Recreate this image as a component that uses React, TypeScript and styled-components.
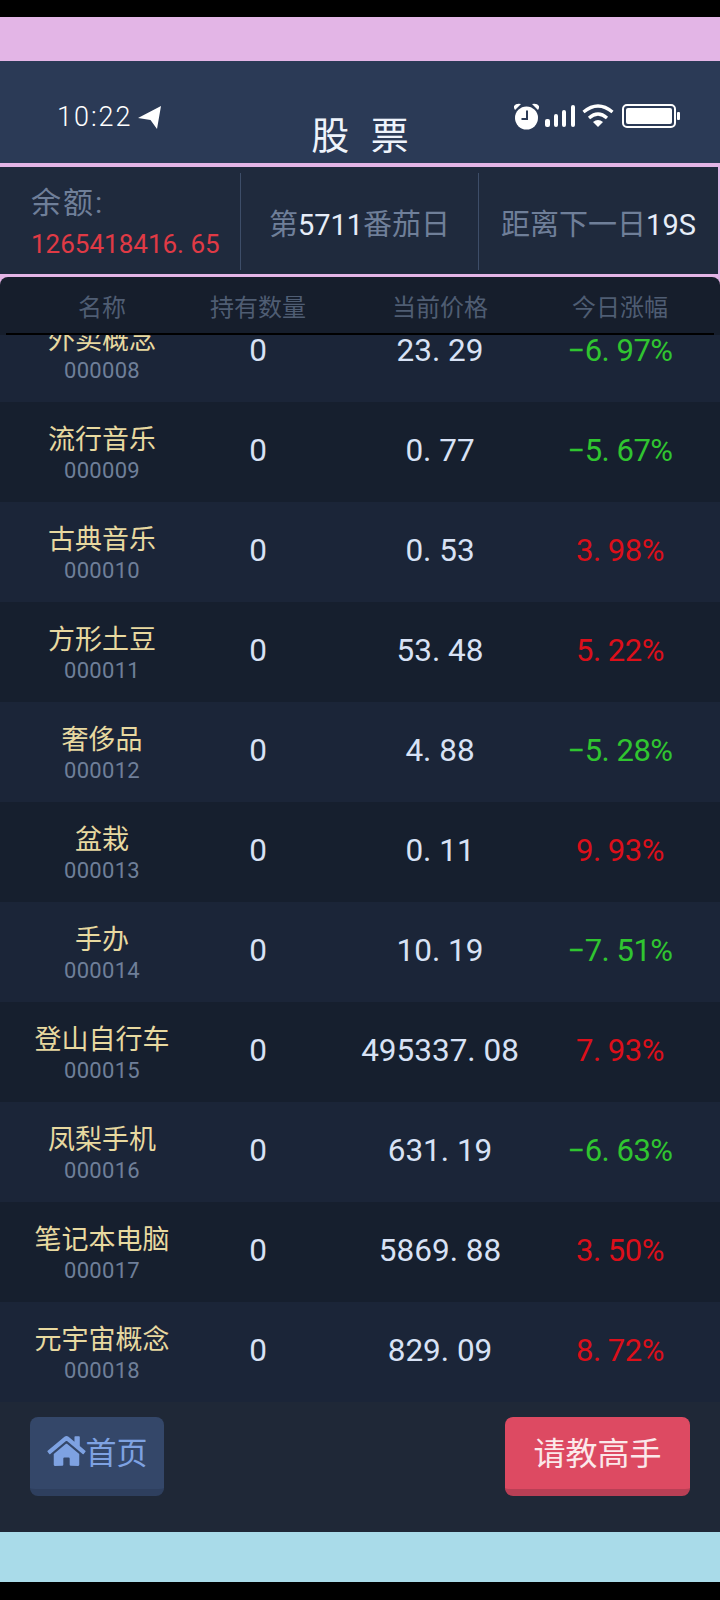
import styled, { createGlobalStyle } from 'styled-components'
import { FaHome } from 'react-icons/fa'

const GlobalStyle = createGlobalStyle`
  html, body {
    margin: 0;
    padding: 0;
    background: #000;
  }
  * {
    box-sizing: border-box;
  }
`

const Screen = styled.div`
  width: 720px;
  height: 1600px;
  padding: 17px 0 18px;
  display: flex;
  flex-direction: column;
  background: #000;
  font-family: Roboto, 'Noto Sans CJK SC', sans-serif;
  font-weight: 400;
  overflow: hidden;
`

const PinkStrip = styled.div`
  height: 44px;
  background: #e3b5e6;
`

const TopBar = styled.header`
  height: 106px;
  padding: 42px 40px 0;
  display: grid;
  grid-template-columns: 1fr auto 1fr;
  align-items: start;
  background: #2b3a56;
  border-bottom: 4px solid #e3b5e6;
`

const Clock = styled.div`
  display: flex;
  align-items: center;
  gap: 5px;
  padding-left: 17px;
  color: #fff;
  font-size: 27px;
  font-weight: 300;
  line-height: 28px;
  letter-spacing: 2px;
`

const Title = styled.h1`
  margin: 9px 0 0;
  color: #eef3fb;
  font-size: 38px;
  line-height: 48px;
  font-weight: 400;
  word-spacing: 12px;
`

const StatusIcons = styled.div`
  display: flex;
  justify-content: flex-end;
  align-items: center;
  margin-top: -1px;
  gap: 5px;
`

const BatterySvg = styled.svg`
  margin-left: 3px;
`

const InfoBar = styled.section`
  height: 107px;
  padding: 6px 0 4px;
  display: grid;
  grid-template-columns: 241px 238px 1fr;
  background: #1f2a3d;
  border-right: 2px solid #e3b5e6;
`

const InfoCell = styled.div<{ $last?: boolean }>`
  display: flex;
  flex-direction: column;
  justify-content: center;
  align-items: center;
  border-right: ${(p) => (p.$last ? 'none' : '1px solid #3d4d68')};
  color: #6f7f99;
  font-size: 29px;
  white-space: nowrap;
  b {
    color: #e6edf8;
    font-weight: 400;
  }
`

const BalanceCell = styled(InfoCell)`
  align-items: flex-start;
  padding-left: 31px;
  gap: 8px;
`

const BalanceValue = styled.div`
  color: #e03a45;
  font-size: 26px;
  line-height: 30px;
`

const BalanceLabel = styled.div`
  font-size: 30px;
  line-height: 36px;
  letter-spacing: 2px;
`

const Board = styled.main`
  flex: 1;
  display: flex;
  flex-direction: column;
  background: #1f2837;
  min-height: 0;
`

const HeadBacking = styled.div`
  padding-top: 3px;
  background: #e3b5e6;
`

const TableHead = styled.div`
  height: 58px;
  padding: 0 6px;
  background: #161e2c;
  border-radius: 8px 8px 0 0;
`

const TableHeadRow = styled.div`
  height: 100%;
  padding-right: 36px;
  display: grid;
  grid-template-columns: 192px 120px 244px 116px;
  align-items: center;
  justify-items: center;
  border-bottom: 2px solid #000;
  color: #4f5d73;
  font-size: 24px;
  white-space: nowrap;
`

const Viewport = styled.div`
  height: 1067px;
  overflow: hidden;
`

const List = styled.div`
  margin-top: -33px;
`

const Row = styled.div<{ $dark: boolean }>`
  height: 100px;
  padding-right: 48px;
  display: grid;
  grid-template-columns: 204px 108px 256px 104px;
  align-items: center;
  justify-items: center;
  background: ${(p) => (p.$dark ? '#161f2e' : '#1b2538')};
  white-space: nowrap;
`

const NameCell = styled.div`
  padding-top: 5px;
  display: flex;
  flex-direction: column;
  align-items: center;
  gap: 1px;
`

const StockName = styled.div`
  color: #e8d9a0;
  font-size: 27px;
  line-height: 32px;
`

const StockCode = styled.div`
  color: #6f7f99;
  font-size: 22px;
  line-height: 28px;
  letter-spacing: 0.3px;
`

const Value = styled.div`
  margin-bottom: 3px;
  color: #d8e2f5;
  font-size: 31.5px;
  line-height: 30px;
`

const Change = styled.div<{ $up: boolean }>`
  margin-bottom: 3px;
  color: ${(p) => (p.$up ? '#dc0f1a' : '#30c530')};
  font-size: 31px;
  line-height: 30px;
  letter-spacing: -0.5px;
`

const Footer = styled.div`
  flex: 1;
  padding: 15px 30px 0;
  display: flex;
  justify-content: space-between;
  align-items: flex-start;
`

const ActionButton = styled.button<{ $tone: 'home' | 'ask' }>`
  height: 79px;
  padding: 0 0 5px;
  width: ${(p) => (p.$tone === 'home' ? '134px' : '185px')};
  display: flex;
  align-items: center;
  justify-content: center;
  border: none;
  border-bottom: 7px solid ${(p) => (p.$tone === 'home' ? '#2e3f5e' : '#b93f55')};
  border-radius: 8px;
  background: ${(p) => (p.$tone === 'home' ? '#344769' : '#dd4a62')};
  color: ${(p) => (p.$tone === 'home' ? '#7ea2e2' : '#fbe8ea')};
  font-family: inherit;
  font-size: ${(p) => (p.$tone === 'home' ? '31px' : '32px')};
  font-weight: 400;
  svg {
    width: 39px;
    height: 34px;
    flex-shrink: 0;
  }
`

const BlueStrip = styled.div`
  height: 50px;
  background: #a9dbe9;
`

const ArrowIcon = () => (
  <svg width="23" height="23" viewBox="0 0 23 23">
    <path d="M23 0 L0 12 L12.5 14 L19 23 Z" fill="#fff" />
  </svg>
)

const AlarmIcon = () => (
  <svg width="27" height="28" viewBox="0 0 27 28">
    <path d="M2 8 L8 2 Q3 1 1 4 Q0.5 6 2 8 Z M25 8 L19 2 Q24 1 26 4 Q26.5 6 25 8 Z" fill="#fff" />
    <circle cx="13.5" cy="16" r="11.5" fill="#fff" />
    <path d="M14 8.5 V17 H8.5" fill="none" stroke="#2b3a56" strokeWidth="2" />
  </svg>
)

const SignalIcon = () => (
  <svg width="32" height="22" viewBox="0 0 32 22">
    <rect x="0" y="14" width="5" height="8" rx="2" fill="#fff" />
    <rect x="9" y="9" width="4" height="13" rx="2" fill="#fff" />
    <rect x="17" y="5" width="4" height="17" rx="2" fill="#fff" />
    <rect x="26" y="0" width="4" height="22" rx="2" fill="#fff" />
  </svg>
)

const WifiIcon = () => (
  <svg width="32" height="24" viewBox="0 0 32 24">
    <path d="M1.5 8 Q16 -4 30.5 8" fill="none" stroke="#fff" strokeWidth="3.2" />
    <path d="M7 14 Q16 6 25 14" fill="none" stroke="#fff" strokeWidth="3.2" />
    <path d="M11 18 Q16 14 21 18 L16 23 Z" fill="#fff" />
  </svg>
)

const BatteryIcon = () => (
  <BatterySvg width="58" height="24" viewBox="0 0 58 24">
    <rect x="1" y="1" width="52" height="22" rx="4" fill="none" stroke="#fff" strokeWidth="2" />
    <rect x="4" y="4" width="46" height="16" rx="2" fill="#fff" />
    <rect x="55" y="8" width="3" height="8" rx="1" fill="#fff" />
  </BatterySvg>
)

interface Stock {
  name: string
  code: string
  held: number
  price: string
  change: string
}

const stocks: Stock[] = [
  { name: '外卖概念', code: '000008', held: 0, price: '23. 29', change: '−6. 97%' },
  { name: '流行音乐', code: '000009', held: 0, price: '0. 77', change: '−5. 67%' },
  { name: '古典音乐', code: '000010', held: 0, price: '0. 53', change: '3. 98%' },
  { name: '方形土豆', code: '000011', held: 0, price: '53. 48', change: '5. 22%' },
  { name: '奢侈品', code: '000012', held: 0, price: '4. 88', change: '−5. 28%' },
  { name: '盆栽', code: '000013', held: 0, price: '0. 11', change: '9. 93%' },
  { name: '手办', code: '000014', held: 0, price: '10. 19', change: '−7. 51%' },
  { name: '登山自行车', code: '000015', held: 0, price: '495337. 08', change: '7. 93%' },
  { name: '凤梨手机', code: '000016', held: 0, price: '631. 19', change: '−6. 63%' },
  { name: '笔记本电脑', code: '000017', held: 0, price: '5869. 88', change: '3. 50%' },
  { name: '元宇宙概念', code: '000018', held: 0, price: '829. 09', change: '8. 72%' },
]

export default function App() {
  return (
    <Screen>
      <GlobalStyle />
      <PinkStrip />
      <TopBar>
        <Clock>
          10:22
          <ArrowIcon />
        </Clock>
        <Title>股 票</Title>
        <StatusIcons>
          <AlarmIcon />
          <SignalIcon />
          <WifiIcon />
          <BatteryIcon />
        </StatusIcons>
      </TopBar>
      <InfoBar>
        <BalanceCell>
          <BalanceLabel>余额:</BalanceLabel>
          <BalanceValue>1265418416. 65</BalanceValue>
        </BalanceCell>
        <InfoCell>
          <span>
            第<b>5711</b>番茄日
          </span>
        </InfoCell>
        <InfoCell $last>
          <span>
            距离下一日<b>19S</b>
          </span>
        </InfoCell>
      </InfoBar>
      <Board>
        <HeadBacking>
          <TableHead>
            <TableHeadRow>
              <span>名称</span>
              <span>持有数量</span>
              <span>当前价格</span>
              <span>今日涨幅</span>
            </TableHeadRow>
          </TableHead>
        </HeadBacking>
        <Viewport>
          <List>
            {stocks.map((stock, i) => (
              <Row key={stock.code} $dark={i % 2 === 1}>
                <NameCell>
                  <StockName>{stock.name}</StockName>
                  <StockCode>{stock.code}</StockCode>
                </NameCell>
                <Value>{stock.held}</Value>
                <Value>{stock.price}</Value>
                <Change $up={!stock.change.startsWith('−')}>{stock.change}</Change>
              </Row>
            ))}
          </List>
        </Viewport>
        <Footer>
          <ActionButton $tone="home">
            <FaHome />
            首页
          </ActionButton>
          <ActionButton $tone="ask">请教高手</ActionButton>
        </Footer>
      </Board>
      <BlueStrip />
    </Screen>
  )
}
